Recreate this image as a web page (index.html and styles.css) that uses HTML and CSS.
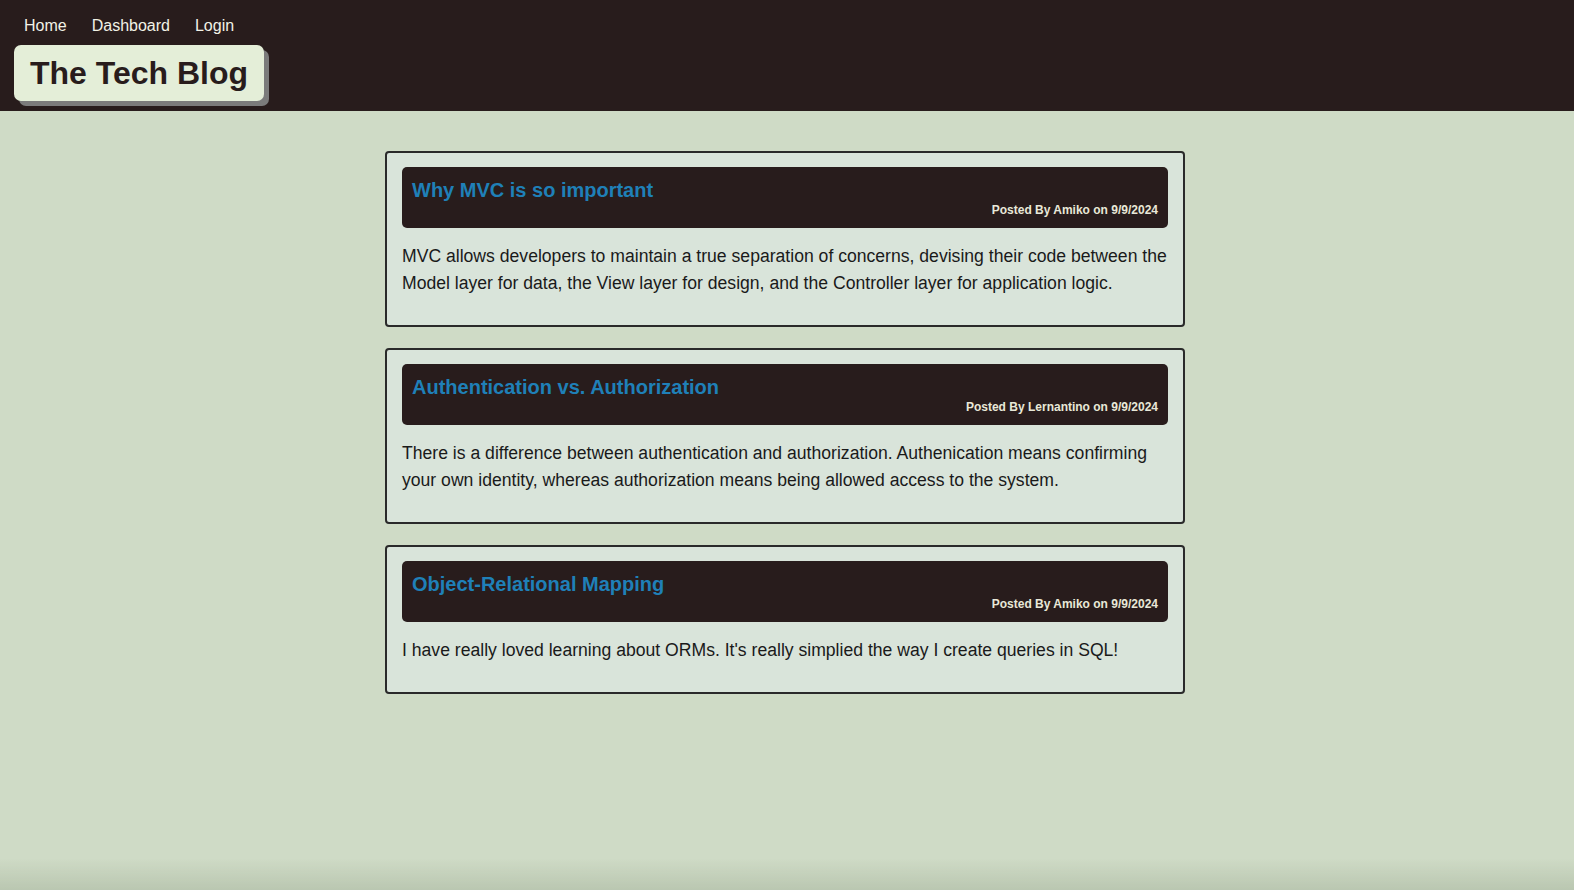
FILE: index.html
```html
<!DOCTYPE html>
<html lang="en">
<head>
<meta charset="utf-8">
<title>The Tech Blog</title>
<link rel="stylesheet" href="styles.css">
</head>
<body>
<header class="site-header">
  <nav class="nav">
    <a href="#" class="nav-link">Home</a>
    <a href="#" class="nav-link">Dashboard</a>
    <a href="#" class="nav-link">Login</a>
  </nav>
  <h1 class="brand">The Tech Blog</h1>
</header>
<main class="posts">
  <article class="post">
    <div class="post-head">
      <h2 class="post-title">Why MVC is so important</h2>
      <p class="post-meta">Posted By Amiko on 9/9/2024</p>
    </div>
    <p class="post-body">MVC allows developers to maintain a true separation of concerns, devising their code between the Model layer for data, the View layer for design, and the Controller layer for application logic.</p>
  </article>
  <article class="post">
    <div class="post-head">
      <h2 class="post-title">Authentication vs. Authorization</h2>
      <p class="post-meta">Posted By Lernantino on 9/9/2024</p>
    </div>
    <p class="post-body">There is a difference between authentication and authorization. Authenication means confirming your own identity, whereas authorization means being allowed access to the system.</p>
  </article>
  <article class="post">
    <div class="post-head">
      <h2 class="post-title">Object-Relational Mapping</h2>
      <p class="post-meta">Posted By Amiko on 9/9/2024</p>
    </div>
    <p class="post-body">I have really loved learning about ORMs. It's really simplied the way I create queries in SQL!</p>
  </article>
</main>
<footer class="page-foot"></footer>
</body>
</html>
```
FILE: styles.css
```css
html, body {
  margin: 0;
  padding: 0;
}
body {
  background: #cfdbc6;
  font-family: "Liberation Sans", Arial, sans-serif;
  color: #1a1a1a;
  min-height: 100vh;
}
.site-header {
  background: #281c1c;
  height: 111px;
  box-sizing: border-box;
  padding: 15px 14px 0;
}
.nav {
  display: flex;
  gap: 25px;
  padding-left: 10px;
  height: 22px;
  align-items: center;
}
.nav-link {
  color: #f2f2e6;
  text-decoration: none;
  font-size: 16px;
}
.brand {
  display: inline-block;
  margin: 8px 0 0;
  background: #e4eed8;
  color: #281c1c;
  font-size: 32px;
  font-weight: bold;
  line-height: 56px;
  padding: 0 16px;
  border-radius: 7px;
  box-shadow: 5px 5px 0 #7b7b7b;
}
.posts {
  width: 800px;
  margin: 40px 0 0 calc(50% - 402px);
  display: flex;
  flex-direction: column;
  gap: 21px;
}
.post {
  background: #d9e4da;
  border: 2px solid #2a2a2a;
  border-radius: 4px;
  padding: 14px 15px;
}
.post-head {
  background: #281c1c;
  border-radius: 5px;
  padding: 11px 10px 10px;
}
.post-title {
  margin: 0;
  color: #1f80b8;
  font-size: 20px;
  line-height: 24px;
  font-weight: bold;
}
.post-meta {
  margin: 1px 0 0;
  text-align: right;
  color: #e8e8d8;
  font-size: 12px;
  font-weight: bold;
  line-height: 15px;
}
.post-body {
  margin: 15px 0 14px;
  font-size: 17.6px;
  line-height: 27px;
  color: #1a1a1a;
}
.page-foot {
  position: fixed;
  left: 0;
  right: 0;
  bottom: 0;
  height: 32px;
  background: linear-gradient(to bottom, rgba(0,0,0,0), rgba(40,60,30,0.12));
  pointer-events: none;
}
```
